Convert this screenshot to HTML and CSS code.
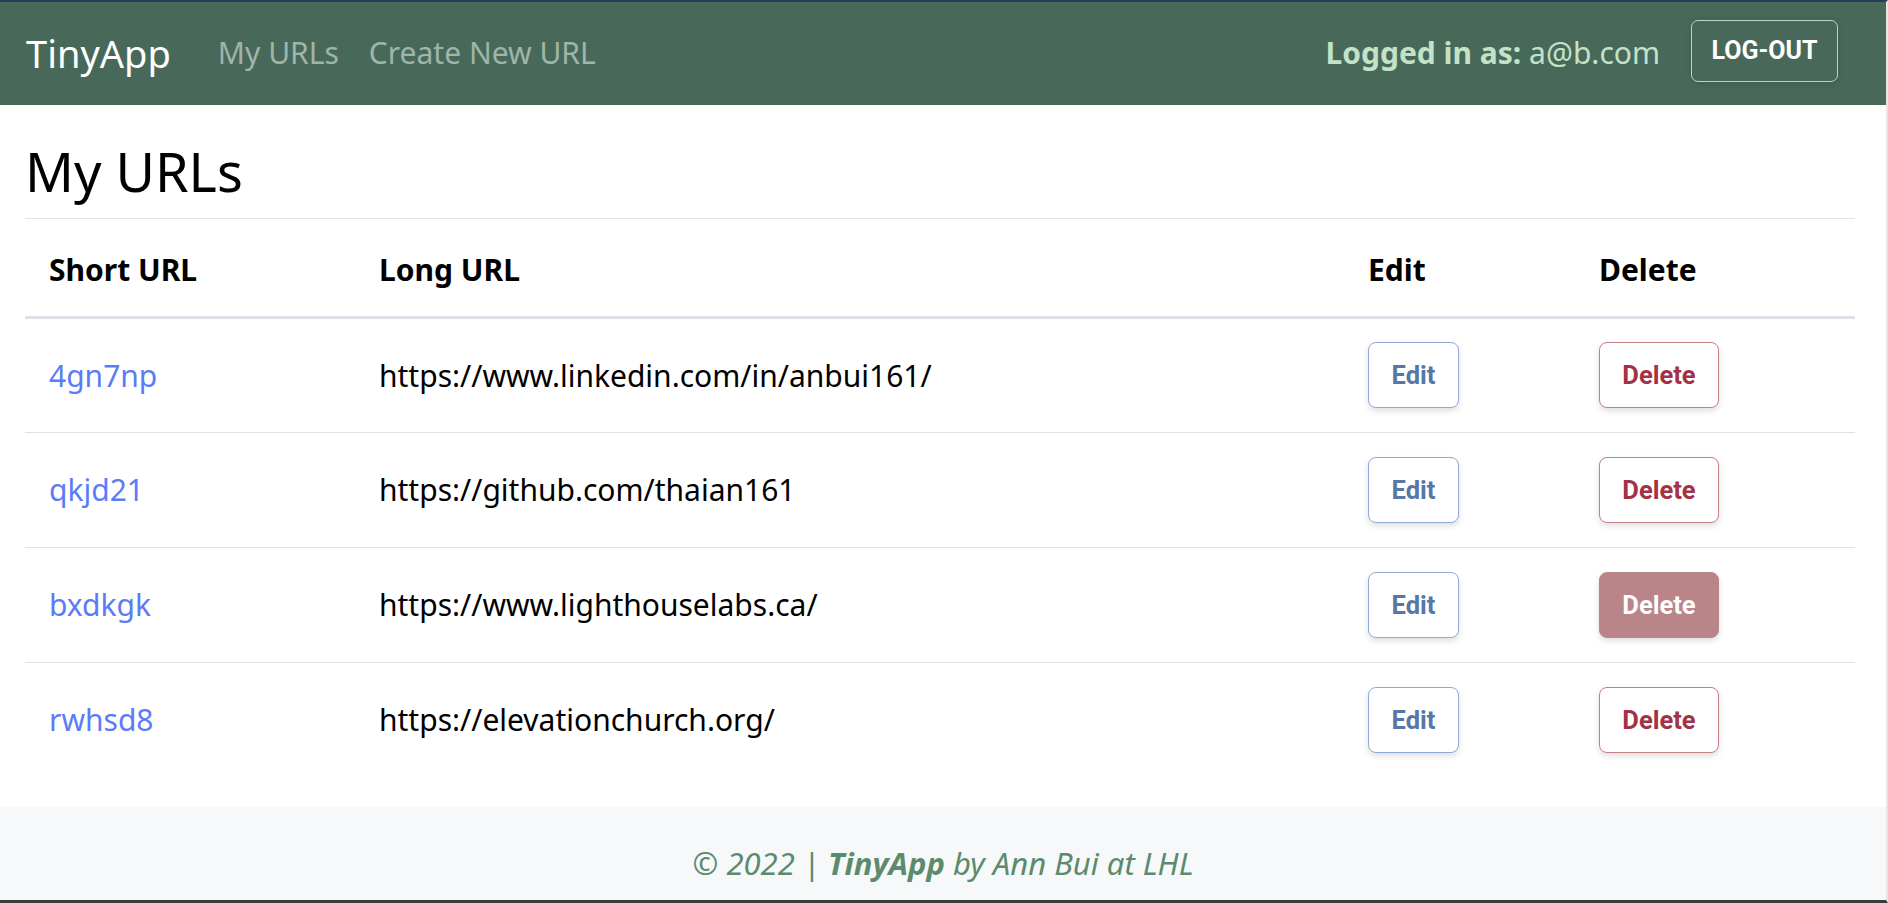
FILE: index.html
```html
<!DOCTYPE html>
<html lang="en">
<head>
<meta charset="utf-8">
<title>TinyApp</title>
<link rel="stylesheet" href="styles.css">
</head>
<body>
<div class="frame">
  <nav class="navbar">
    <a class="brand" href="#">TinyApp</a>
    <div class="nav-links">
      <a class="nav-link" href="#">My URLs</a>
      <a class="nav-link" href="#">Create New URL</a>
    </div>
    <div class="nav-right">
      <span class="user"><b>Logged in as:</b> a@b.com</span>
      <button class="btn-logout">LOG-OUT</button>
    </div>
  </nav>
  <main class="content">
    <h1 class="title">My URLs</h1>
    <table class="urls">
      <thead>
        <tr>
          <th class="c-short">Short URL</th>
          <th class="c-long">Long URL</th>
          <th class="c-edit">Edit</th>
          <th class="c-del">Delete</th>
        </tr>
      </thead>
      <tbody>
        <tr>
          <td><a class="short" href="#">4gn7np</a></td>
          <td>https://www.linkedin.com/in/anbui161/</td>
          <td><button class="btn btn-edit">Edit</button></td>
          <td><button class="btn btn-del">Delete</button></td>
        </tr>
        <tr>
          <td><a class="short" href="#">qkjd21</a></td>
          <td>https://github.com/thaian161</td>
          <td><button class="btn btn-edit">Edit</button></td>
          <td><button class="btn btn-del">Delete</button></td>
        </tr>
        <tr>
          <td><a class="short" href="#">bxdkgk</a></td>
          <td>https://www.lighthouselabs.ca/</td>
          <td><button class="btn btn-edit">Edit</button></td>
          <td><button class="btn btn-del is-hover">Delete</button></td>
        </tr>
        <tr class="last">
          <td><a class="short" href="#">rwhsd8</a></td>
          <td>https://elevationchurch.org/</td>
          <td><button class="btn btn-edit">Edit</button></td>
          <td><button class="btn btn-del">Delete</button></td>
        </tr>
      </tbody>
    </table>
  </main>
  <footer class="footer">
    <p>© 2022 | <b>TinyApp</b> by Ann Bui at LHL</p>
  </footer>
</div>
</body>
</html>
```
FILE: styles.css
```css
* { box-sizing: border-box; }
html, body { margin: 0; padding: 0; }
body {
  background: #ffffff;
  font-family: "Noto Sans", "Open Sans", sans-serif;
  color: #000;
  height: 903px;
  overflow: hidden;
}
.frame {
  height: 903px;
  border-top: 2px solid #2c3a5a;
  border-right: 2px solid #e6e6e6;
  border-bottom: 3px solid #3b3b3b;
  display: flex;
  flex-direction: column;
}
.navbar {
  height: 103px;
  flex: none;
  background: #48695a;
  display: flex;
  align-items: center;
  padding: 0 48px 0 26px;
}
.brand {
  color: #ffffff;
  text-decoration: none;
  font-size: 38px;
  margin-right: 47px;
  margin-top: -2px;
}
.nav-links { display: flex; gap: 30px; }
.nav-link {
  color: #9fb5a9;
  text-decoration: none;
  font-size: 30px;
  margin-top: -2px;
}
.nav-right {
  margin-left: auto;
  display: flex;
  align-items: center;
}
.user {
  color: #c3e2c8;
  font-size: 30px;
  margin-right: 31px;
  margin-top: -2px;
}
.user b { font-weight: 700; }
.btn-logout {
  width: 147px;
  height: 62px;
  background: transparent;
  border: 1px solid #b9d9be;
  border-radius: 7px;
  color: #ffffff;
  font-family: Roboto, sans-serif;
  font-weight: 700;
  font-size: 25px;
  box-shadow: 0 2px 6px rgba(0,0,0,0.12);
  margin-top: -6px;
}
.content {
  flex: 1;
  padding: 0 31px 0 25px;
}
.title {
  font-weight: 400;
  font-size: 54px;
  margin: 0;
  padding: 29px 0 0 0;
  height: 114px;
  border-bottom: 1px solid #dee2e6;
}
.urls {
  width: 100%;
  border-collapse: collapse;
  margin-top: 5px;
  font-size: 30px;
}
.urls th {
  text-align: left;
  font-weight: 700;
  height: 93px;
  padding: 0 24px;
  vertical-align: middle;
  border-bottom: 3px solid #dee2e6;
}
.urls td {
  height: 115px;
  padding: 0 24px;
  vertical-align: middle;
  border-bottom: 1px solid #dee2e6;
}
.urls tr.last td { border-bottom: none; }
.c-short { width: 330px; }
.c-long { width: 989px; }
.c-edit { width: 231px; }
.short { color: #5b7cf6; text-decoration: none; }
.btn {
  height: 66px;
  border-radius: 8px;
  background: #ffffff;
  font-family: Roboto, sans-serif;
  font-weight: 700;
  font-size: 25.5px;
  box-shadow: 0 3px 6px rgba(0,0,0,0.13);
  cursor: pointer;
  padding: 0;
}
.btn-edit {
  width: 91px;
  border: 1px solid #8eaad6;
  color: #5777a7;
}
.btn-del {
  width: 120px;
  border: 1px solid #c47f87;
  color: #a33247;
}
.btn-del.is-hover {
  background: #b98588;
  border-color: #b98588;
  color: #ffffff;
}
.footer {
  flex: none;
  height: 93px;
  background: #f7f8fa;
  display: flex;
  align-items: center;
  justify-content: center;
}
.footer p {
  margin: 18px 0 0 0;
  font-style: italic;
  font-size: 31px;
  color: #5b8b6d;
}
.footer b { font-weight: 700; }
```
